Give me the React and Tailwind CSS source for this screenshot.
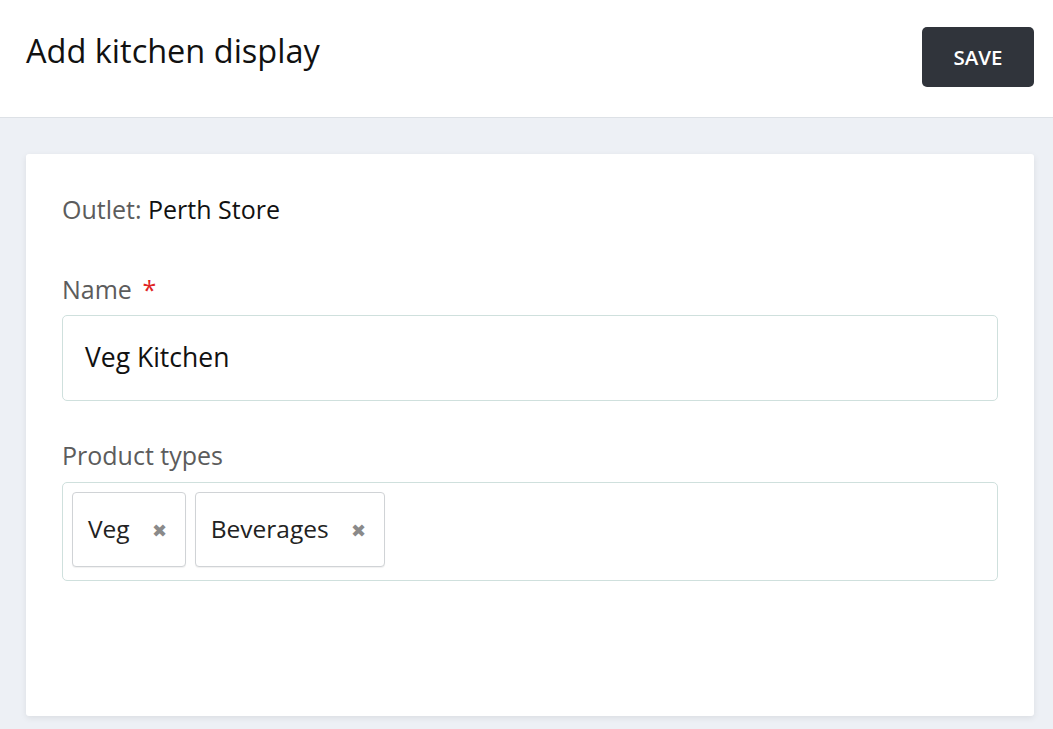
import React from 'react';

const Chip = ({ label }) => (
    <div className="flex items-center h-[75px] pl-[15px] pr-[18px] border border-[#d0d3d6] rounded-[4px] bg-white shadow-[0_1px_1px_rgba(0,0,0,0.06)]">
        <span className="text-[24.5px] text-[#222]">{label}</span>
        <span className="ml-[22px] text-[18px] text-[#8a8a8a] leading-none">✖</span>
    </div>
);

const App = () => {
    return (
        <div className="min-h-screen bg-[#edf0f5] font-['Open_Sans',sans-serif]">
            <div className="h-[118px] bg-white border-b border-[#dde1e6] flex items-start justify-between pl-[26px] pr-[19px]">
                <h1 className="mt-[28px] text-[32.5px] text-[#111] leading-[46px]">Add kitchen display</h1>
                <button className="mt-[27px] w-[112px] h-[60px] rounded-[5px] bg-[#30343b] text-white text-[20.5px] font-semibold">
                    SAVE
                </button>
            </div>

            <div className="pt-[36px] pl-[26px] pr-[19px] pb-[13px]">
                <div className="bg-white rounded-[3px] shadow-[0_2px_6px_rgba(0,0,0,0.08)] h-[562px] px-[36px] pt-[37px]">
                    <div className="text-[25px] leading-[36px]">
                        <span className="text-[#5c5c5c]">Outlet: </span>
                        <span className="text-[#111]">Perth Store</span>
                    </div>

                    <div className="mt-[44px] text-[25px] leading-[36px] text-[#5c5c5c]">
                        Name <span className="text-[#e02424] ml-[4px]">*</span>
                    </div>
                    <div className="mt-[8px] h-[86px] border border-[#cfe0dd] rounded-[5px] flex items-center px-[22px]">
                        <span className="text-[26.5px] text-[#111]">Veg Kitchen</span>
                    </div>

                    <div className="mt-[36px] text-[25px] leading-[36px] text-[#5c5c5c]">Product types</div>
                    <div className="mt-[9px] h-[99px] border border-[#cfe0dd] rounded-[5px] flex items-start gap-[9px] pl-[9px] pt-[9px]">
                        <Chip label="Veg" />
                        <Chip label="Beverages" />
                    </div>
                </div>
            </div>
        </div>
    );
};

export default App;
